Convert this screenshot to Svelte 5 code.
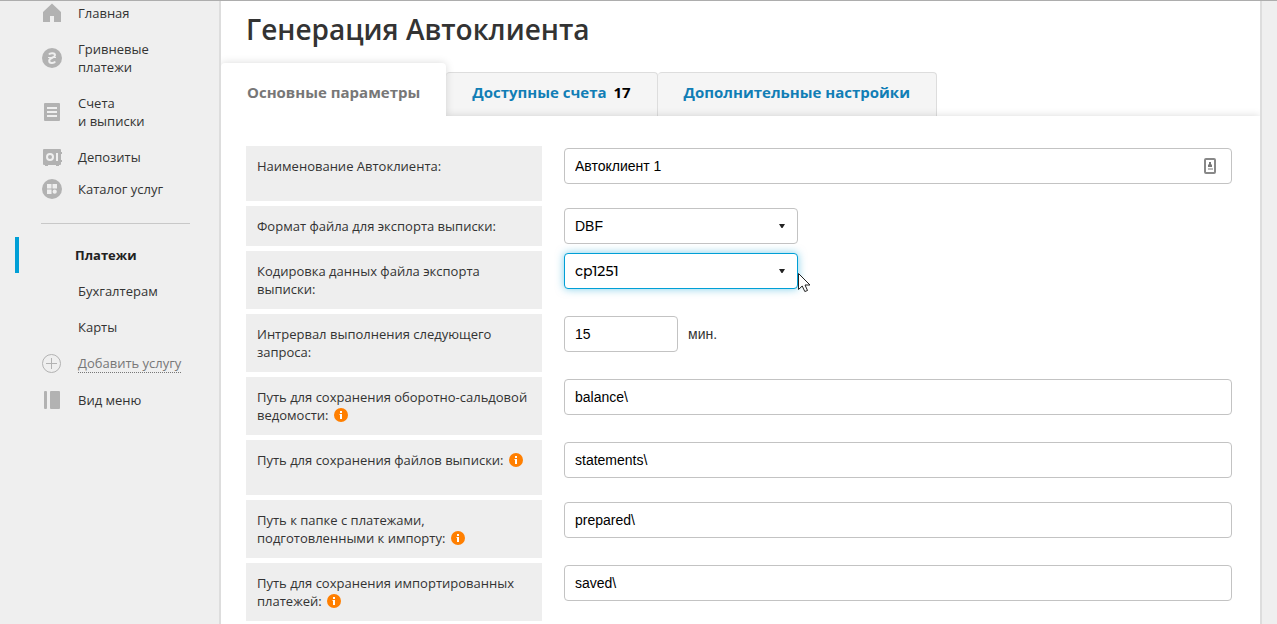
<script>
  let mainMenu = [
    { id: "home", title: "Главная" },
    { id: "hryvnia", title: "Гривневые\nплатежи" },
    { id: "accounts", title: "Счета\nи выписки" },
    { id: "deposits", title: "Депозиты" },
    { id: "catalog", title: "Каталог услуг", compact: true },
  ];

  let services = [
    { title: "Платежи", active: true },
    { title: "Бухгалтерам" },
    { title: "Карты" },
  ];

  let tabs = [
    { title: "Основные параметры" },
    { title: "Доступные счета", count: 17 },
    { title: "Дополнительные настройки" },
  ];
  let activeTab = 0;

  let fields = [
    { id: "name", label: "Наименование Автоклиента:", type: "text", value: "Автоклиент 1", contact: true },
    { id: "format", label: "Формат файла для экспорта выписки:", type: "select", value: "DBF", options: ["DBF", "XML", "CSV"] },
    {
      id: "encoding",
      label: "Кодировка данных файла экспорта выписки:",
      type: "select",
      value: "cp1251",
      options: ["cp1251", "cp866", "utf-8"],
      focused: true,
    },
    { id: "interval", label: "Интрервал выполнения следующего запроса:", type: "text", value: "15", unit: "мин." },
    { id: "balance", label: "Путь для сохранения оборотно-сальдовой ведомости:", type: "text", value: "balance\\", info: true },
    { id: "statements", label: "Путь для сохранения файлов выписки:", type: "text", value: "statements\\", info: true },
    { id: "prepared", label: "Путь к папке с платежами, подготовленными к импорту:", type: "text", value: "prepared\\", info: true },
    { id: "saved", label: "Путь для сохранения импортированных платежей:", type: "text", value: "saved\\", info: true },
  ];
</script>

<div class="page">
  <nav class="sidebar">
    <ul class="menu">
      {#each mainMenu as item}
        <li class:compact={item.compact}>
          <a href="#{item.id}">
            <svg class="icon" viewBox="0 0 20 20" aria-hidden="true">
              {#if item.id === "home"}
                <path d="M10 0.500 L19 9 V19 H12 V13 H8 V19 H1 V9 Z" />
              {:else if item.id === "hryvnia"}
                <circle cx="10" cy="10" r="10" />
                <path
                  class="line"
                  d="M7 6.500 C8 4.800 13 4.600 13 7.200 C13 10 7.200 9.500 7.200 12.700 C7.200 15.800 12 15.400 13.200 13.500"
                />
                <path class="bar" d="M6 9.500 H14" />
              {:else if item.id === "accounts"}
                <rect x="2" y="1" width="16" height="18" rx="1" />
                <path class="line" d="M5 6 H15 M5 10 H15 M5 14 H15" />
              {:else if item.id === "deposits"}
                <path d="M2 2 H18 a1 1 0 0 1 1 1 V5 H20 V7 H19 V13 H20 V15 H19 V17 a1 1 0 0 1 -1 1 H17 V19 H14 V18 H6 V19 H3 V18 H2 a1 1 0 0 1 -1 -1 V3 a1 1 0 0 1 1 -1 Z" />
                <circle class="line" cx="8" cy="10" r="3" />
                <path class="line" d="M15 6 V14" />
              {:else}
                <circle cx="10" cy="10" r="10" />
                <path class="hole" d="M5 5 H9.500 V9.500 H5 Z M10.500 5 H15 V9.500 H10.500 Z M5 10.500 H9.500 V15 H5 Z" />
                <circle class="hole" cx="12.700" cy="12.700" r="2.100" />
              {/if}
            </svg>
            <span>{item.title}</span>
          </a>
        </li>
      {/each}
    </ul>

    <hr />

    <ul class="services">
      {#each services as service}
        <li class:active={service.active}>
          <a href="#service">{service.title}</a>
        </li>
      {/each}
    </ul>

    <div class="tools">
      <button class="add">
        <svg class="icon" viewBox="0 0 20 20" aria-hidden="true">
          <circle class="thin" cx="9.500" cy="9.500" r="9" />
          <path class="thin" d="M4 9.500 H15 M9.500 4 V15" />
        </svg>
        <span>Добавить услугу</span>
      </button>
      <button>
        <svg class="icon" viewBox="0 0 20 20" aria-hidden="true">
          <rect x="2" y="1" width="3" height="18" rx="1" />
          <rect x="8" y="1" width="10" height="18" rx="1" />
        </svg>
        <span>Вид меню</span>
      </button>
    </div>
  </nav>

  <main>
    <h1>Генерация Автоклиента</h1>

    <div class="tabs" role="tablist">
      {#each tabs as tab, idx}
        <button role="tab" aria-selected={activeTab === idx} class:active={activeTab === idx} on:click={() => (activeTab = idx)}>
          {tab.title}
          {#if tab.count}
            <span class="count">{tab.count}</span>
          {/if}
        </button>
      {/each}
    </div>

    <form class="panel">
      {#each fields as field}
        <div class="row">
          <label for={field.id}>
            {field.label}
            {#if field.info}
              <svg class="info" viewBox="0 0 14 14" aria-hidden="true">
                <circle cx="7" cy="7" r="7" />
                <path d="M6 3 H8 V5 H6 Z M5.500 6 H8 V11 H6 V7 H5.500 Z" />
              </svg>
            {/if}
          </label>
          <div class="field" class:short={field.type === "select"}>
            {#if field.type === "select"}
              <div class="select" class:focused={field.focused}>
                <select id={field.id} bind:value={field.value}>
                  {#each field.options as option}
                    <option>{option}</option>
                  {/each}
                </select>
                <svg class="arrow" viewBox="0 0 6 4" aria-hidden="true"><path d="M0 0 H6 L3.500 4 H2.500 Z" /></svg>
                {#if field.focused}
                  <svg class="cursor" viewBox="0 0 13 20" aria-hidden="true">
                    <path d="M0.500 0.500 V16.500 L4.200 13 L6.800 18.500 L9.500 17.500 L7 12 H12 Z" />
                  </svg>
                {/if}
              </div>
            {:else}
              <div class="text" class:number={field.unit}>
                <input id={field.id} type="text" bind:value={field.value} />
                {#if field.contact}
                  <svg class="contact" viewBox="0 0 12 16" aria-hidden="true">
                    <rect class="frame" x="1" y="1" width="10" height="14" rx="1" />
                    <path d="M5 4 H7 V6 L8 7 V9 H4 V7 L5 6 Z" />
                    <path class="pale" d="M4 10 H9 V12 H4 Z" />
                  </svg>
                {/if}
              </div>
              {#if field.unit}
                <span class="unit">{field.unit}</span>
              {/if}
            {/if}
          </div>
        </div>
      {/each}
    </form>
  </main>
</div>

<style>
  :global(body) {
    background-color: #efefef;
  }

  .page {
    display: flex;
    box-sizing: border-box;
    min-height: 100vh;
    border-top: 1px solid #adadad;
    background-color: #efefef;
    color: #333;
    font-family: "Open Sans", "Noto Sans", sans-serif;
    font-size: 13px;
    line-height: 18px;
  }

  button {
    border: none;
    background: none;
    font: inherit;
    cursor: pointer;
  }

  .sidebar {
    flex: 0 0 219px;
  }

  .sidebar ul {
    list-style: none;
    margin: 0;
    padding: 0;
  }

  .sidebar .menu {
    display: flex;
    flex-direction: column;
    gap: 18px;
    padding: 3px 0 0 42px;
  }

  .menu .compact {
    margin-top: -4px;
  }

  .sidebar a {
    color: #333;
    text-decoration: none;
  }

  .menu a,
  .tools button {
    display: flex;
    align-items: center;
    gap: 16px;
    white-space: pre-line;
  }

  .icon {
    width: 20px;
    height: 20px;
    margin: -1px 0;
    fill: #b2b2b2;
  }

  .icon .line {
    fill: none;
    stroke: #efefef;
    stroke-width: 2;
  }

  .icon .bar {
    fill: none;
    stroke: #efefef;
  }

  .icon .hole {
    fill: #efefef;
  }

  .icon .thin {
    fill: none;
    stroke: #b2b2b2;
  }

  hr {
    margin: 25px 29px 13px 41px;
    border: none;
    border-top: 1px solid #c8c8c8;
  }

  .services li {
    margin-left: 15px;
    padding: 9px 0 9px 63px;
  }

  .services .active {
    border-left: 4px solid #009fd6;
    padding-left: 56px;
  }

  .services .active a {
    color: #222;
    font-weight: 700;
  }

  .tools {
    display: flex;
    flex-direction: column;
    align-items: flex-start;
    gap: 18px;
    padding: 9px 0 0 42px;
  }

  .tools button {
    padding: 0;
    color: #333;
  }

  .tools .add {
    color: #777;
  }

  .tools .add span {
    border-bottom: 1px dotted #777;
  }

  main {
    flex: 1;
    display: flex;
    flex-direction: column;
    overflow: hidden;
    margin-right: 15px;
    border: solid #ddd;
    border-width: 0 2px;
    background-color: white;
  }

  h1 {
    margin: 0;
    padding: 10px 25px 16px;
    font-size: 28px;
    font-weight: 600;
    line-height: 36px;
  }

  .tabs {
    display: flex;
    align-items: flex-end;
  }

  .tabs button {
    box-sizing: border-box;
    height: 44px;
    margin: 0;
    padding: 0 26px 5px;
    border: 1px solid #ddd;
    border-width: 1px 1px 0 0;
    border-radius: 4px 4px 0 0;
    background-color: #f5f5f5;
    color: #117eb5;
    font-size: 15px;
    font-weight: 700;
  }

  .tabs .active {
    position: relative;
    z-index: 2;
    height: 53px;
    padding-top: 5px;
    padding-bottom: 0;
    border: none;
    background-color: white;
    box-shadow: 0 0 8px rgba(0, 0, 0, 0.15);
    clip-path: inset(-10px -10px 0 0);
    color: #777;
  }

  .tabs .count {
    margin-left: 3px;
    color: black;
  }

  .panel {
    position: relative;
    z-index: 1;
    flex: 1;
    display: flex;
    flex-direction: column;
    gap: 5px;
    padding: 30px 28px 3px 25px;
    background-color: white;
    box-shadow: 0 0 8px rgba(0, 0, 0, 0.15);
  }

  .row {
    display: flex;
    gap: 22px;
  }

  .row label {
    box-sizing: border-box;
    flex: 0 0 296px;
    padding: 11px;
    background-color: #eee;
  }

  .info {
    width: 14px;
    height: 14px;
    margin-left: 2px;
    vertical-align: -2px;
    fill: #ff7f00;
  }

  .info path {
    fill: white;
  }

  .field {
    flex: 1;
    display: flex;
    gap: 10px;
    padding: 2px 0 17px;
    font-family: "Liberation Sans", Arial, sans-serif;
    font-size: 14px;
  }

  .field.short {
    padding-bottom: 2px;
  }

  .text {
    position: relative;
    flex: 1;
  }

  .text.number {
    flex: 0 0 114px;
  }

  .select {
    position: relative;
    flex: 0 0 234px;
  }

  .field input,
  .field select {
    appearance: none;
    box-sizing: border-box;
    display: block;
    width: 100%;
    height: 36px;
    margin: 0;
    padding: 0 10px;
    border: 1px solid #c3c3c3;
    border-radius: 4px;
    outline: none;
    background-color: white;
    color: black;
    font: inherit;
  }

  .focused select {
    border-color: #009fd6;
    box-shadow: 0 0 8px rgba(0, 159, 214, 0.5);
    font-family: Montserrat, Lato, sans-serif;
    font-weight: 500;
  }

  .arrow {
    position: absolute;
    top: 16px;
    right: 13px;
    width: 6px;
    height: 4px;
    fill: #222;
    pointer-events: none;
  }

  .cursor {
    position: absolute;
    top: 20px;
    left: 234px;
    width: 13px;
    height: 20px;
    fill: white;
    stroke: #222;
    pointer-events: none;
  }

  .contact {
    position: absolute;
    top: 10px;
    right: 16px;
    width: 12px;
    height: 16px;
    fill: #777;
  }

  .contact .frame {
    fill: none;
    stroke: #888;
    stroke-width: 2;
  }

  .contact .pale {
    fill: #bbb;
  }

  .unit {
    line-height: 36px;
  }
</style>
